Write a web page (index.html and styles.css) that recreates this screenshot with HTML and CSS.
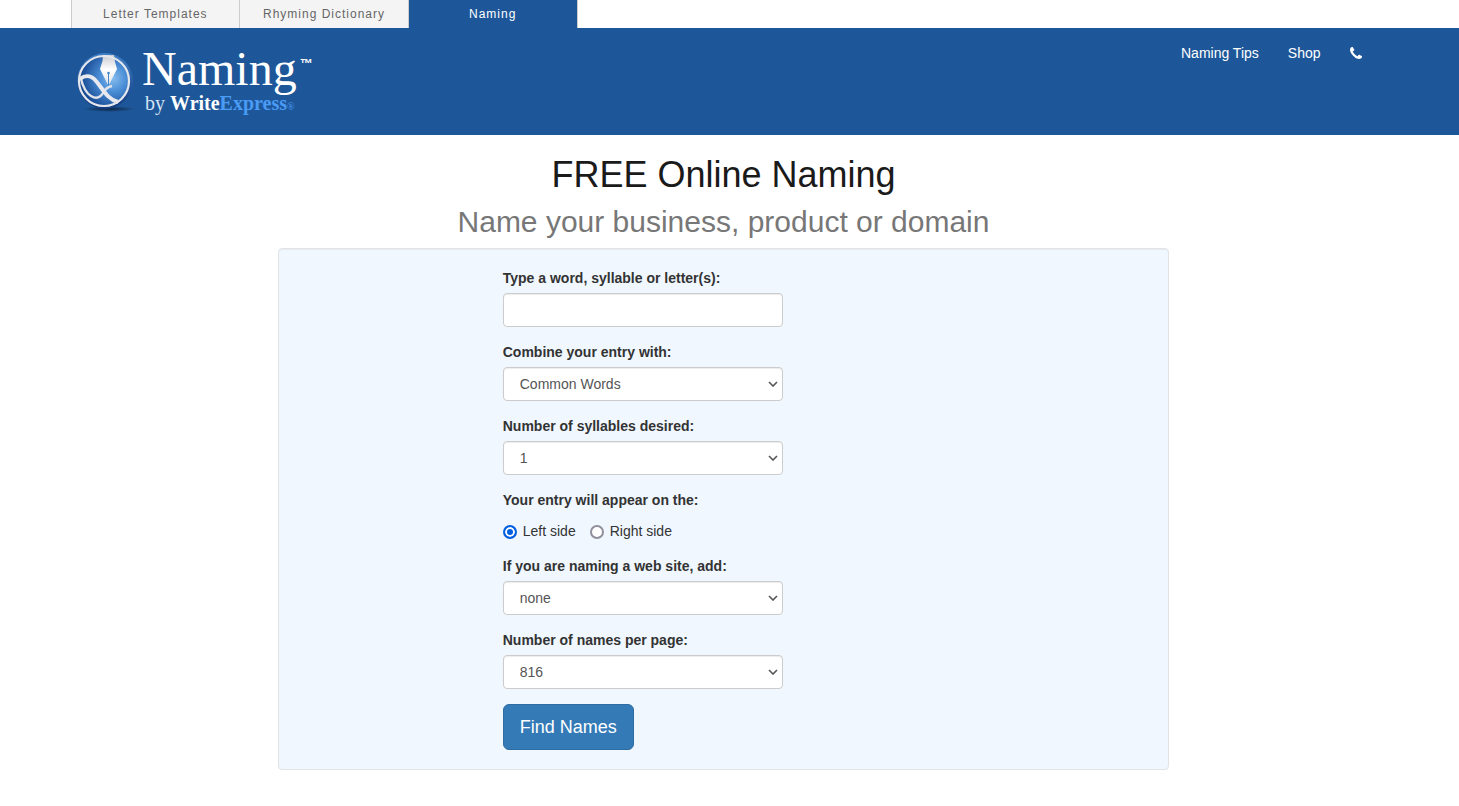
FILE: index.html
```html
<!DOCTYPE html>
<html lang="en">
<head>
  <meta charset="utf-8">
  <meta name="viewport" content="width=device-width, initial-scale=1">
  <title>FREE Online Naming</title>
  <link rel="stylesheet" href="styles.css">
</head>
<body>
  <nav class="site-tabs">
    <div class="container">
      <div class="tab-list">
        <a class="tab" href="#">Letter Templates</a>
        <a class="tab" href="#">Rhyming Dictionary</a>
        <a class="tab active" href="#">Naming</a>
      </div>
    </div>
  </nav>

  <header class="header">
    <div class="container header-inner">
      <a class="logo" href="#">
        <svg width="260" height="80" viewBox="0 0 260 80" role="img" aria-label="Naming by WriteExpress">
          <defs>
            <radialGradient id="ball" cx="0.68" cy="0.45" r="0.66">
              <stop offset="0" stop-color="#86bcee"/>
              <stop offset="0.4" stop-color="#4a8ed6"/>
              <stop offset="1" stop-color="#15468f"/>
            </radialGradient>
            <linearGradient id="rim" x1="0" y1="0" x2="0" y2="1">
              <stop offset="0" stop-color="#3f7fc6"/>
              <stop offset="1" stop-color="#143c80"/>
            </linearGradient>
            <radialGradient id="shadow">
              <stop offset="0" stop-color="#0b1f3c" stop-opacity="0.9"/>
              <stop offset="1" stop-color="#0b1f3c" stop-opacity="0"/>
            </radialGradient>
            <linearGradient id="metal" x1="0" y1="0" x2="0" y2="1">
              <stop offset="0" stop-color="#c6c9d0"/>
              <stop offset="0.5" stop-color="#ffffff"/>
              <stop offset="1" stop-color="#dfe2e8"/>
            </linearGradient>
          </defs>
          <ellipse cx="38" cy="62" rx="26" ry="3" fill="url(#shadow)"/>
          <circle cx="34" cy="34" r="28" fill="url(#rim)"/>
          <circle cx="33" cy="34" r="25" fill="url(#ball)"/>
          <path d="M32 8h11l1 7 2 7-7.500 15h-2l-7.500-15 2.500-8z" fill="url(#metal)"/>
          <path d="M37.500 26v13" stroke="#3f86cb" stroke-width="1"/>
          <circle cx="37.500" cy="26" r="1.300" fill="#3f86cb"/>
          <path d="M10 32c2 8 5 14 10 17 5 3 9 2 12-3 2-4 4-6 9-7" fill="none" stroke="#e2e3ea" stroke-width="2.400"/>
          <path d="M9 32c5-4 11-4 16 2 7 8 11 18 22 21" fill="none" stroke="#e8e9ee" stroke-width="4"/>
          <circle cx="33" cy="34" r="25" fill="none" stroke="#e6e7ec" stroke-width="2.200"/>
          <text class="logo-name" x="71" y="38">Naming</text>
          <text class="logo-tm" x="229" y="21">™</text>
          <text class="logo-by" x="74" y="63">by <tspan class="logo-write">Write</tspan><tspan class="logo-express">Express</tspan><tspan class="logo-reg">®</tspan></text>
        </svg>
      </a>
      <nav class="main-nav">
        <a href="#">Naming Tips</a>
        <a href="#">Shop</a>
        <a href="#" aria-label="Phone">
          <svg class="phone" viewBox="0 128 1408 1408" aria-hidden="true"><path fill="currentColor" d="M1408 1240q0 27-10 70.500t-21 68.500q-21 50-122 106-94 51-186 51-27 0-52.500-3.500t-57.500-12.500-47.500-14.500-55.500-20.500-49-18q-98-35-175-83-128-79-264.500-215.500t-215.500-264.500q-48-77-83-175-3-9-18-49t-20.500-55.500-14.500-47.500-12.500-57.500-3.500-52.500q0-92 51-186 56-101 106-122 25-11 68.500-21.500t70.500-10.500q14 0 21 3 18 6 53 76 11 19 30 54t35 63.500 31 53.500q3 4 17.500 25t21.500 35.500 7 28.500q0 20-28.500 50t-62 55-62 53-28.500 46q0 9 5 22.500t8.500 20.500 14 24 11.500 19q76 137 174 235t235 174q2 1 19 11.500t24 14 20.500 8.500 22.500 5q18 0 46-28.500t53-62 55-62 50-28.500q14 0 28.500 7t35.500 21.500 25 17.500q25 15 53.500 31t63.500 35 54 30q70 35 76 53 3 7 3 21z"/></svg>
        </a>
      </nav>
    </div>
  </header>

  <main class="content">
    <h1>FREE Online Naming</h1>
    <h2>Name your business, product or domain</h2>

    <form class="well">
      <div class="fields">
        <div class="form-group">
          <label for="word">Type a word, syllable or letter(s):</label>
          <input class="form-control" type="text" id="word" name="word">
        </div>
        <div class="form-group">
          <label for="combine">Combine your entry with:</label>
          <select class="form-control" id="combine" name="combine">
            <option>Common Words</option>
          </select>
        </div>
        <div class="form-group">
          <label for="syllables">Number of syllables desired:</label>
          <select class="form-control" id="syllables" name="syllables">
            <option>1</option>
          </select>
        </div>
        <fieldset class="form-group">
          <legend>Your entry will appear on the:</legend>
          <div class="radios">
            <label><input type="radio" name="side" value="left" checked>Left side</label>
            <label><input type="radio" name="side" value="right">Right side</label>
          </div>
        </fieldset>
        <div class="form-group">
          <label for="domain">If you are naming a web site, add:</label>
          <select class="form-control" id="domain" name="domain">
            <option>none</option>
          </select>
        </div>
        <div class="form-group">
          <label for="perpage">Number of names per page:</label>
          <select class="form-control" id="perpage" name="perpage">
            <option>816</option>
          </select>
        </div>
        <button class="btn" type="submit">Find Names</button>
      </div>
    </form>
  </main>
</body>
</html>
```
FILE: styles.css
```css
* {
  box-sizing: border-box;
}

body {
  margin: 0;
  font-family: "Liberation Sans", Arial, sans-serif;
  font-size: 14px;
  line-height: 20px;
  color: #333;
  background: #fff;
}

a {
  color: inherit;
  text-decoration: none;
}

.container {
  max-width: 1306px;
  margin: 0 auto;
}

.site-tabs,
.header,
.content {
  padding-right: 12px;
}

/* Tabs above the header */
.tab-list {
  display: flex;
  max-width: 507px;
}

.tab {
  flex: 1;
  height: 28px;
  border-left: 1px solid #ccc;
  background: #f4f4f4;
  color: #666;
  font-size: 12px;
  line-height: 28px;
  letter-spacing: 1px;
  text-align: center;
}

.tab.active {
  border-right: 1px solid #ccc;
  background: #1e5799;
  color: #fff;
}

/* Header */
.header {
  background: #1e5799;
  color: #fff;
}

.header-inner {
  display: flex;
  justify-content: space-between;
  min-height: 107px;
  padding: 15px 15px 0 0;
}

.logo svg {
  display: block;
  margin-top: 4px;
  overflow: visible;
}

.logo-name {
  font: 48px "Liberation Serif", serif;
  fill: #fff;
}

.logo-tm {
  font: bold 13px "Liberation Sans", sans-serif;
  fill: #fff;
}

.logo-by {
  font: 20px "Liberation Serif", serif;
  fill: #d5e3f5;
}

.logo-write {
  font-weight: bold;
  fill: #fff;
}

.logo-express {
  font-weight: bold;
  fill: #4a9bf5;
}

.logo-reg {
  font-size: 10px;
  fill: #4a9bf5;
}

.main-nav {
  display: flex;
  align-items: flex-start;
  gap: 29px;
}

.phone {
  display: block;
  width: 12px;
  height: 20px;
}

/* Naming form */
.content {
  text-align: center;
}

h1,
h2 {
  margin: 0;
  font-weight: normal;
}

h1 {
  padding-top: 20px;
  font-size: 36px;
  line-height: 40px;
  color: #1a1a1a;
}

h2 {
  margin: 10px 0;
  font-size: 30px;
  line-height: 33px;
  color: #777;
}

.well {
  max-width: 891px;
  margin: 0 auto 20px;
  padding: 19px;
  border: 1px solid #e3e3e3;
  border-radius: 4px;
  background: #f0f7ff;
  box-shadow: inset 0 1px 1px rgba(0, 0, 0, 0.05);
  text-align: left;
}

.fields {
  max-width: 485px;
  margin-left: calc(25% - 8px);
}

.form-group {
  margin: 0 0 15px;
  padding: 0;
  border: 0;
}

.form-group > label,
legend {
  display: block;
  margin-bottom: 5px;
  padding: 0;
  font-weight: bold;
}

.form-control {
  display: block;
  width: 280px;
  height: 34px;
  padding: 6px 12px;
  border: 1px solid #ccc;
  border-radius: 4px;
  background-color: #fff;
  box-shadow: inset 0 1px 1px rgba(0, 0, 0, 0.075);
  color: #555;
  font: inherit;
}

select.form-control {
  padding: 6px 16px;
  appearance: none;
  background-image: url("data:image/svg+xml,%3Csvg xmlns='http://www.w3.org/2000/svg' width='10' height='6'%3E%3Cpath d='M1 1l4 4 4-4' fill='none' stroke='%23555' stroke-width='1.6'/%3E%3C/svg%3E");
  background-repeat: no-repeat;
  background-position: right 4px center;
}

.radios {
  display: flex;
  gap: 14px;
  padding-top: 6px;
}

.radios label {
  display: flex;
  align-items: center;
  gap: 6px;
}

.radios input {
  appearance: none;
  width: 14px;
  height: 14px;
  margin: 2px 0 0;
  border: 2px solid #8f8f9d;
  border-radius: 50%;
  background: #fff;
}

.radios input:checked {
  border-color: #0060df;
  background: #0060df;
  box-shadow: inset 0 0 0 2px #fff;
}

.btn {
  display: block;
  padding: 10px 16px;
  border: 1px solid #2e6da4;
  border-radius: 6px;
  background: #337ab7;
  color: #fff;
  font-family: inherit;
  font-size: 18px;
  line-height: 24px;
}
```
